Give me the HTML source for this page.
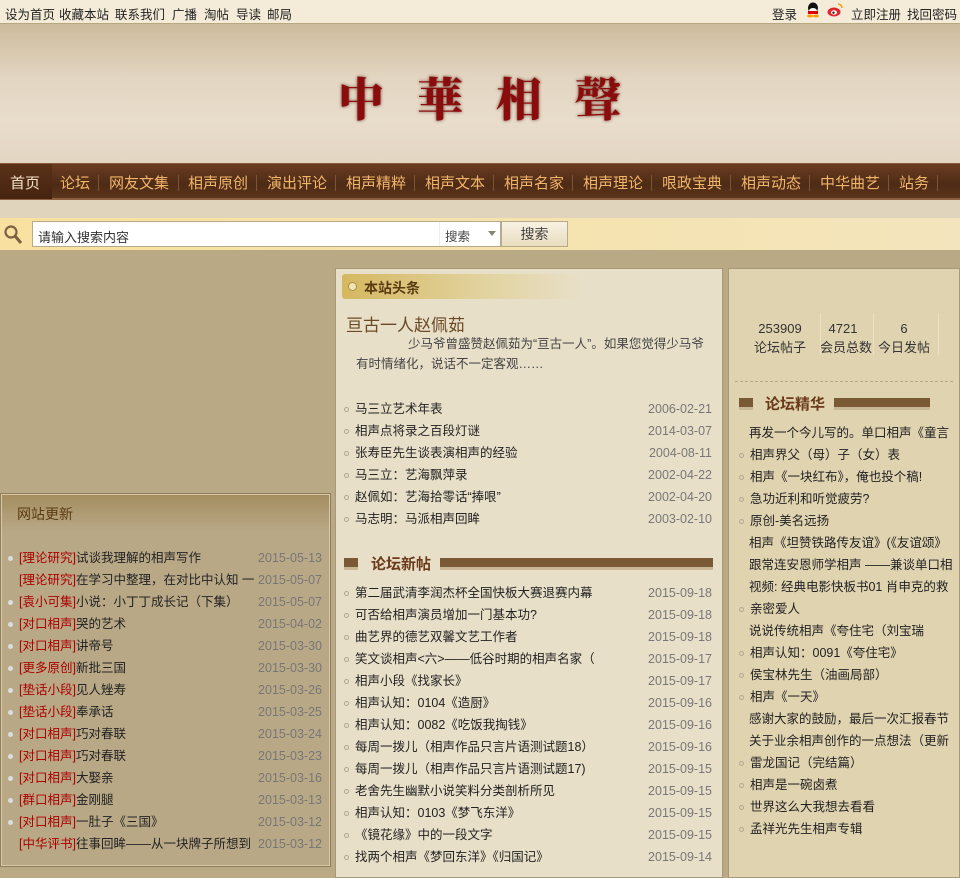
<!DOCTYPE html>
<html><head><meta charset="utf-8">
<style>
*{margin:0;padding:0;box-sizing:border-box}
body{width:960px;height:873px;overflow:hidden;position:relative;font-family:"Liberation Sans","Noto Sans CJK SC",sans-serif;font-size:12px;color:#222;background:#bcaa86}
.a{position:absolute;white-space:nowrap}
#top{left:0;top:0;width:960px;height:24px;background:#f4ecd9;border-bottom:1px solid #b8a880}
#top span{position:absolute;top:4px;font-size:12.5px;color:#222}
#banner{left:0;top:24px;width:960px;height:139px;background:linear-gradient(#cdbb9c,#e3d6c2 40%,#e8dccb 70%,#e3d6c3)}
#title{left:338px;top:64px;font-family:"Noto Serif CJK SC",serif;font-weight:900;font-size:46px;color:#8a0c0c;letter-spacing:33px;text-shadow:0 0 3px #6a3a2a}
#nav{left:0;top:163px;width:960px;height:37px;background:linear-gradient(#6a3d22,#4e2b15 60%,#5a341c);border-top:1px solid #8a5a3a;border-bottom:2px solid #8c6040}
#nav span{position:absolute;top:8px;font-size:15px;color:#f2b56c}
#nav i{position:absolute;top:11px;width:1px;height:16px;background:#7a5535}
#sub{left:0;top:200px;width:960px;height:18px;background:#e0d4bd}
#sbar{left:0;top:218px;width:960px;height:32px;background:linear-gradient(90deg,#f8e1a0,#f5e3b0 60%,#f3e4bd)}
#body{left:0;top:250px;width:960px;height:623px;background:#baa985}
.panel{position:absolute}
.d{color:#777;font-size:12.5px}
.dot{display:inline-block;width:5px;height:5px;border:1px solid #b0a890;border-radius:50%;margin-right:6px;vertical-align:middle}
.sd{display:inline-block;width:5px;height:5px;background:#ddd;border-radius:50%;margin-right:6px;vertical-align:middle}
.r{color:#a00}
</style></head><body>
<div id="top" class="a">
<span style="left:5px">设为首页</span><span style="left:59px">收藏本站</span><span style="left:115px">联系我们</span><span style="left:172px">广播</span><span style="left:204px">淘帖</span><span style="left:236px">导读</span><span style="left:267px">邮局</span>
<span style="left:772px">登录</span>
<svg class="a" style="left:806px;top:2px" width="14" height="16"><ellipse cx="7" cy="6" rx="5" ry="5.5" fill="#111"/><ellipse cx="7" cy="9" rx="4" ry="3" fill="#fff"/><rect x="2" y="9" width="10" height="3" fill="#d00"/><ellipse cx="4" cy="14" rx="3" ry="1.5" fill="#f90"/><ellipse cx="10" cy="14" rx="3" ry="1.5" fill="#f90"/></svg>
<svg class="a" style="left:827px;top:2px" width="17" height="16"><ellipse cx="7" cy="10" rx="6.5" ry="4.5" fill="#e4242b"/><ellipse cx="7" cy="10.5" rx="3" ry="2.2" fill="#fff"/><circle cx="6.5" cy="10.7" r="1.2" fill="#222"/><path d="M11 2a4 4 0 0 1 4 4" stroke="#f39c12" stroke-width="1.6" fill="none"/></svg>
<span style="left:851px">立即注册</span><span style="left:907px">找回密码</span>
</div>
<div id="banner" class="a"></div>
<div id="title" class="a">中華相聲</div>
<div id="nav" class="a">
<div class="a" style="left:0;top:0;width:52px;height:35px;background:linear-gradient(#5a3219,#46230f)"></div>
<span style="left:10px;color:#f3e3c8">首页</span>
<span style="left:60px">论坛</span><i style="left:98px"></i>
<span style="left:109px">网友文集</span><i style="left:178px"></i>
<span style="left:188px">相声原创</span><i style="left:256px"></i>
<span style="left:267px">演出评论</span><i style="left:335px"></i>
<span style="left:346px">相声精粹</span><i style="left:414px"></i>
<span style="left:425px">相声文本</span><i style="left:493px"></i>
<span style="left:504px">相声名家</span><i style="left:572px"></i>
<span style="left:583px">相声理论</span><i style="left:651px"></i>
<span style="left:662px">哏政宝典</span><i style="left:730px"></i>
<span style="left:741px">相声动态</span><i style="left:809px"></i>
<span style="left:820px">中华曲艺</span><i style="left:888px"></i>
<span style="left:899px">站务</span><i style="left:937px"></i>
</div>
<div id="sub" class="a"></div>
<div id="sbar" class="a">
<svg class="a" style="left:3px;top:6px" width="20" height="22"><circle cx="8" cy="8" r="5.5" stroke="#7a6040" stroke-width="2.2" fill="none"/><path d="M12 12l6 7" stroke="#7a6040" stroke-width="3"/></svg>
<div class="a" style="left:32px;top:3px;width:469px;height:26px;background:#fff;border:1px solid #b7aa8a"></div>
<div class="a" style="left:38px;top:9px;font-size:13px;color:#333">请输入搜索内容</div>
<div class="a" style="left:439px;top:4px;width:1px;height:24px;background:#eee"></div>
<div class="a" style="left:445px;top:8px;font-size:12.5px;color:#444">搜索</div>
<div class="a" style="left:488px;top:13px;width:0;height:0;border:4px solid transparent;border-top:5px solid #887"></div>
<div class="a" style="left:501px;top:3px;width:67px;height:26px;background:linear-gradient(#f8f2e2,#e8dcc0);border:1px solid #b7aa8a;text-align:center;line-height:24px;font-size:14px;color:#444">搜索</div>
</div>
<div id="body" class="a"></div>

<!-- left panel -->
<div class="panel" style="left:0;top:493px;width:331px;height:374px;background:#b9a886;border:1px solid #8f7d5c;box-shadow:inset 0 0 0 1px #d8c8a6"></div>
<div class="a" style="left:2px;top:495px;width:327px;height:36px;background:linear-gradient(#a48d60,#b9a886)"></div>
<div class="a" style="left:17px;top:504px;font-size:14px;color:#5a3a10">网站更新</div>
<div class="a" style="left:8px;top:547px;width:314px;line-height:22px;font-size:12.5px">
<div><span class="sd"></span><span class="r">[理论研究]</span>试谈我理解的相声写作<span class="d" style="float:right">2015-05-13</span></div>
<div style="padding-left:11px"><span class="r">[理论研究]</span>在学习中整理，在对比中认知 一<span class="d" style="float:right">2015-05-07</span></div>
<div><span class="sd"></span><span class="r">[袁小可集]</span>小说：小丁丁成长记（下集）<span class="d" style="float:right">2015-05-07</span></div>
<div><span class="sd"></span><span class="r">[对口相声]</span>哭的艺术<span class="d" style="float:right">2015-04-02</span></div>
<div><span class="sd"></span><span class="r">[对口相声]</span>讲帝号<span class="d" style="float:right">2015-03-30</span></div>
<div><span class="sd"></span><span class="r">[更多原创]</span>新批三国<span class="d" style="float:right">2015-03-30</span></div>
<div><span class="sd"></span><span class="r">[垫话小段]</span>见人矬寿<span class="d" style="float:right">2015-03-26</span></div>
<div><span class="sd"></span><span class="r">[垫话小段]</span>奉承话<span class="d" style="float:right">2015-03-25</span></div>
<div><span class="sd"></span><span class="r">[对口相声]</span>巧对春联<span class="d" style="float:right">2015-03-24</span></div>
<div><span class="sd"></span><span class="r">[对口相声]</span>巧对春联<span class="d" style="float:right">2015-03-23</span></div>
<div><span class="sd"></span><span class="r">[对口相声]</span>大娶亲<span class="d" style="float:right">2015-03-16</span></div>
<div><span class="sd"></span><span class="r">[群口相声]</span>金刚腿<span class="d" style="float:right">2015-03-13</span></div>
<div><span class="sd"></span><span class="r">[对口相声]</span>一肚子《三国》<span class="d" style="float:right">2015-03-12</span></div>
<div style="padding-left:11px"><span class="r">[中华评书]</span>往事回眸——从一块牌子所想到<span class="d" style="float:right">2015-03-12</span></div>
</div>

<!-- middle -->
<div class="panel" style="left:335px;top:268px;width:388px;height:610px;background:#e8dfc8;border:1px solid #a8977a"></div>
<div class="a" style="left:342px;top:274px;width:240px;height:25px;border-radius:3px;background:linear-gradient(90deg,#d5b860,#e2d3a0 60%,#e8dfc8)"></div>
<div class="a" style="left:348px;top:282px;width:9px;height:9px;border-radius:50%;background:#f0e6b8;border:1px solid #b09040"></div>
<div class="a" style="left:364px;top:278px;font-size:14px;font-weight:bold;color:#5a3a10">本站头条</div>
<div class="a" style="left:346px;top:311px;font-size:17px;color:#6a4a25">亘古一人赵佩茹</div>
<div class="a" style="left:356px;top:334px;width:360px;font-size:12.5px;color:#444;line-height:20px;text-indent:52px;white-space:normal">少马爷曾盛赞赵佩茹为“亘古一人”。如果您觉得少马爷有时情绪化，说话不一定客观……</div>
<div class="a" style="left:344px;top:398px;width:368px;line-height:22px;font-size:12.5px">
<div><span class="dot"></span>马三立艺术年表<span class="d" style="float:right">2006-02-21</span></div>
<div><span class="dot"></span>相声点将录之百段灯谜<span class="d" style="float:right">2014-03-07</span></div>
<div><span class="dot"></span>张寿臣先生谈表演相声的经验<span class="d" style="float:right">2004-08-11</span></div>
<div><span class="dot"></span>马三立：艺海飘萍录<span class="d" style="float:right">2002-04-22</span></div>
<div><span class="dot"></span>赵佩如：艺海拾零话“捧哏”<span class="d" style="float:right">2002-04-20</span></div>
<div><span class="dot"></span>马志明：马派相声回眸<span class="d" style="float:right">2003-02-10</span></div>
</div>
<div class="a" style="left:344px;top:558px;width:14px;height:12px;background:#7a5a35;border-bottom:3px solid #c8b898"></div>
<div class="a" style="left:371px;top:553px;font-size:15px;font-weight:bold;color:#6a3a1a">论坛新帖</div>
<div class="a" style="left:440px;top:558px;width:273px;height:12px;background:#7a5a35;border-bottom:3px solid #c8b898"></div>
<div class="a" style="left:344px;top:582px;width:368px;line-height:22px;font-size:12.5px">
<div><span class="dot"></span>第二届武清李润杰杯全国快板大赛退赛内幕<span class="d" style="float:right">2015-09-18</span></div>
<div><span class="dot"></span>可否给相声演员增加一门基本功?<span class="d" style="float:right">2015-09-18</span></div>
<div><span class="dot"></span>曲艺界的德艺双馨文艺工作者<span class="d" style="float:right">2015-09-18</span></div>
<div><span class="dot"></span>笑文谈相声&lt;六&gt;——低谷时期的相声名家（<span class="d" style="float:right">2015-09-17</span></div>
<div><span class="dot"></span>相声小段《找家长》<span class="d" style="float:right">2015-09-17</span></div>
<div><span class="dot"></span>相声认知：0104《造厨》<span class="d" style="float:right">2015-09-16</span></div>
<div><span class="dot"></span>相声认知：0082《吃饭我掏钱》<span class="d" style="float:right">2015-09-16</span></div>
<div><span class="dot"></span>每周一拨儿（相声作品只言片语测试题18）<span class="d" style="float:right">2015-09-16</span></div>
<div><span class="dot"></span>每周一拨儿（相声作品只言片语测试题17)<span class="d" style="float:right">2015-09-15</span></div>
<div><span class="dot"></span>老舍先生幽默小说笑料分类剖析所见<span class="d" style="float:right">2015-09-15</span></div>
<div><span class="dot"></span>相声认知：0103《梦飞东洋》<span class="d" style="float:right">2015-09-15</span></div>
<div><span class="dot"></span>《镜花缘》中的一段文字<span class="d" style="float:right">2015-09-15</span></div>
<div><span class="dot"></span>找两个相声《梦回东洋》《归国记》<span class="d" style="float:right">2015-09-14</span></div>
</div>

<!-- right -->
<div class="panel" style="left:728px;top:268px;width:232px;height:610px;background:#e0d3b0;border:1px solid #a8977a"></div>
<div class="a" style="left:748px;top:319px;font-size:13px;color:#333;line-height:19px;text-align:center">
<div class="a" style="left:0;width:64px">253909<br>论坛帖子</div>
<div class="a" style="left:72px;width:46px">4721<br>会员总数</div>
<div class="a" style="left:126px;width:60px">6<br>今日发帖</div>
</div>
<div class="a" style="left:820px;top:313px;width:1px;height:42px;background:#ece0c5"></div>
<div class="a" style="left:873px;top:313px;width:1px;height:42px;background:#ece0c5"></div>
<div class="a" style="left:938px;top:313px;width:1px;height:42px;background:#ece0c5"></div>
<div class="a" style="left:735px;top:381px;width:218px;border-top:1px dashed #b8a888"></div>
<div class="a" style="left:739px;top:398px;width:14px;height:12px;background:#7a5a35;border-bottom:3px solid #c8b898"></div>
<div class="a" style="left:765px;top:393px;font-size:15px;font-weight:bold;color:#6a3a1a">论坛精华</div>
<div class="a" style="left:834px;top:398px;width:96px;height:12px;background:#7a5a35;border-bottom:3px solid #c8b898"></div>
<div class="a" style="left:739px;top:422px;width:215px;line-height:22px;font-size:12.5px;overflow:hidden">
<div style="padding-left:10px">再发一个今儿写的。单口相声《童言</div>
<div><span class="dot"></span>相声界父（母）子（女）表</div>
<div><span class="dot"></span>相声《一块红布》，俺也投个稿!</div>
<div><span class="dot"></span>急功近利和听觉疲劳?</div>
<div><span class="dot"></span>原创-美名远扬</div>
<div style="padding-left:10px">相声《坦赞铁路传友谊》(《友谊颂》</div>
<div style="padding-left:10px">跟常连安恩师学相声 ——兼谈单口相</div>
<div style="padding-left:10px">视频: 经典电影快板书01 肖申克的救</div>
<div><span class="dot"></span>亲密爱人</div>
<div style="padding-left:10px">说说传统相声《夸住宅（刘宝瑞</div>
<div><span class="dot"></span>相声认知：0091《夸住宅》</div>
<div><span class="dot"></span>侯宝林先生（油画局部）</div>
<div><span class="dot"></span>相声《一天》</div>
<div style="padding-left:10px">感谢大家的鼓励，最后一次汇报春节</div>
<div style="padding-left:10px">关于业余相声创作的一点想法（更新</div>
<div><span class="dot"></span>雷龙国记（完结篇）</div>
<div><span class="dot"></span>相声是一碗卤煮</div>
<div><span class="dot"></span>世界这么大我想去看看</div>
<div><span class="dot"></span>孟祥光先生相声专辑</div>
</div>
</body></html>
